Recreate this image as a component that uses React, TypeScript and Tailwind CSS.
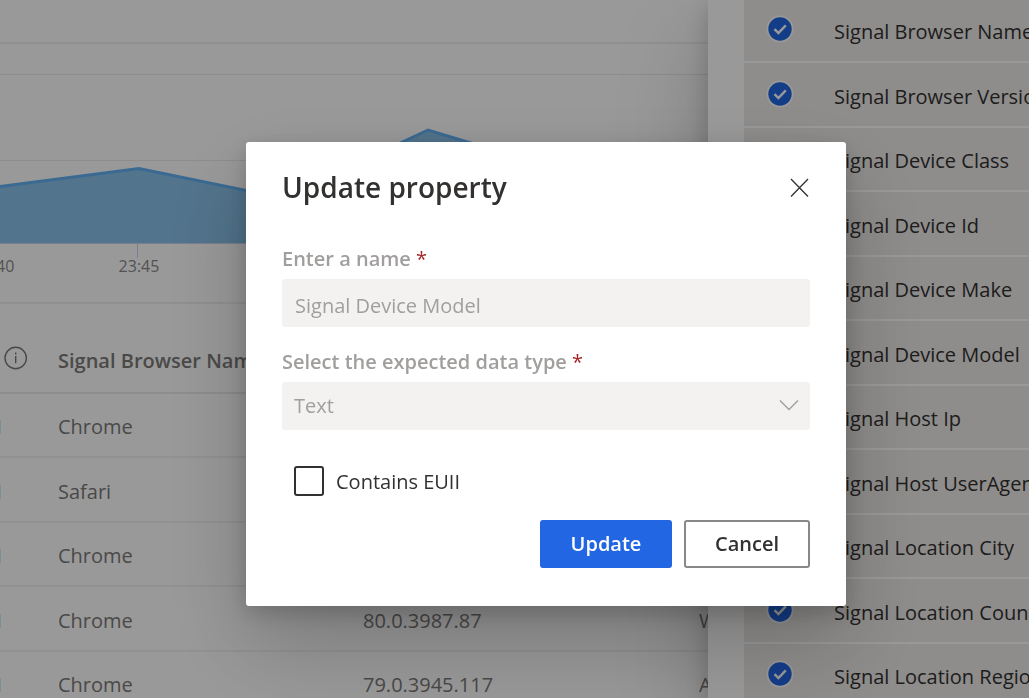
import type { ReactNode } from 'react';

const properties = [
  'Signal Browser Name',
  'Signal Browser Version',
  'Signal Device Class',
  'Signal Device Id',
  'Signal Device Make',
  'Signal Device Model',
  'Signal Host Ip',
  'Signal Host UserAgent',
  'Signal Location City',
  'Signal Location Country',
  'Signal Location Region',
];

const rows = [
  { browser: 'Chrome', version: '', device: '' },
  { browser: 'Safari', version: '', device: '' },
  { browser: 'Chrome', version: '', device: '' },
  { browser: 'Chrome', version: '80.0.3987.87', device: 'W' },
  { browser: 'Chrome', version: '79.0.3945.117', device: 'A' },
];

function Chart() {
  return (
    <div className="h-[302px] overflow-hidden">
      <svg width="720" height="302" viewBox="0 0 720 302" role="img" aria-label="Signals over time">
        <rect x="0" y="42" width="720" height="2" fill="#f1f0ef" />
        <rect x="0" y="74" width="720" height="1" fill="#ebebeb" />
        <rect x="0" y="160" width="720" height="1" fill="#ebebeb" />
        <path d="M-7 187.5L139 168.5L283 198L428 130L573 174L718 190V244H-7Z" fill="#89c1e9" />
        <path d="M-7 187.5L139 168.5L283 198L428 130L573 174L718 190" fill="none" stroke="#61b0f3" strokeWidth="3" />
        <rect x="0" y="243" width="720" height="1" fill="#ccd6eb" />
        <rect x="137" y="244" width="1" height="14" fill="#ccd6eb" />
        <g fontSize="16" fill="#8a8a8a" textAnchor="middle">
          <text x="-6" y="272">23:40</text>
          <text x="139" y="272">23:45</text>
        </g>
      </svg>
    </div>
  );
}

function SignalTable() {
  return (
    <table className="w-full table-fixed border-separate border-spacing-0 border-t-2 border-[#f1f0ef] text-left whitespace-nowrap text-[#7c7a78]">
      <colgroup>
        <col className="w-[58px]" />
        <col className="w-[305px]" />
        <col className="w-[336px]" />
        <col />
      </colgroup>
      <thead>
        <tr className="h-[90px]">
          <th className="border-b-2 border-[#edebe9] p-0 pt-5 pl-1">
            <svg width="24" height="24" viewBox="0 0 24 24" fill="none" stroke="#7c7a78" strokeWidth="1.4" aria-label="Info">
              <circle cx="11.7" cy="12" r="10.7" />
              <path d="M11.7 10v7.2M11.7 6.6v1.8" />
            </svg>
          </th>
          <th className="border-b-2 border-[#edebe9] p-0 pt-[26px] font-semibold">Signal Browser Name</th>
          <th className="border-b-2 border-[#edebe9] p-0" />
          <th className="border-b-2 border-[#edebe9] p-0" />
        </tr>
      </thead>
      <tbody>
        {rows.map((row, index) => (
          <tr key={index} className="odd:h-16 even:h-[65px]">
            <td className="border-b-2 border-[#f3f2f1] p-0 pt-1">
              <span className="flex w-[2px] justify-end">M</span>
            </td>
            <td className="border-b-2 border-[#f3f2f1] p-0 pt-1">{row.browser}</td>
            <td className="border-b-2 border-[#f3f2f1] p-0 pt-1">{row.version}</td>
            <td className="border-b-2 border-[#f3f2f1] p-0 pt-1">{row.device}</td>
          </tr>
        ))}
      </tbody>
    </table>
  );
}

function CheckBadge() {
  return (
    <svg width="28" height="28" viewBox="0 0 28 28" fill="none" aria-hidden="true">
      <circle cx="14" cy="14" r="13.4" fill="#ffffff" />
      <circle cx="14" cy="14" r="11.7" fill="#2266e3" />
      <path d="M8.5 14.2L12.4 18.1L19.8 10.3" stroke="#ffffff" strokeWidth="2.4" />
    </svg>
  );
}

function PropertyPanel() {
  return (
    <aside className="relative w-[321px] shrink-0 bg-white pl-9 shadow-[0_38px_86px_rgba(0,0,0,0.22),0_7px_22px_rgba(0,0,0,0.18)]">
      <ul className="-mt-px overflow-hidden">
        {properties.map((name) => (
          <li
            key={name}
            className="flex items-center gap-10 border-b-2 border-white bg-[#edebe9] pt-1 pl-[22px] whitespace-nowrap text-[#323130] odd:h-16 even:h-[65px]"
          >
            <span className="-mt-1.5 shrink-0">
              <CheckBadge />
            </span>
            <span>{name}</span>
          </li>
        ))}
      </ul>
    </aside>
  );
}

function FieldLabel({ htmlFor, children }: { htmlFor: string; children: ReactNode }) {
  return (
    <label htmlFor={htmlFor} className="block h-9 leading-8 font-semibold text-[#a19f9d]">
      {children} <span className="font-normal text-[#a4262c]">*</span>
    </label>
  );
}

function UpdateDialog() {
  return (
    <div className="fixed inset-0 flex items-center justify-center bg-black/40 pt-[50px] pl-[63px]">
      <div
        role="dialog"
        aria-modal="true"
        aria-labelledby="dialog-title"
        className="w-[600px] rounded-[3px] bg-white shadow-[0_38px_86px_rgba(0,0,0,0.22),0_7px_22px_rgba(0,0,0,0.18)]"
      >
        <header className="flex h-[101px] items-start justify-between pt-6 pr-6 pl-9">
          <h1 id="dialog-title" className="text-[28px] leading-[42px] font-semibold text-[#323130]">
            Update property
          </h1>
          <button type="button" aria-label="Close" className="flex h-11 w-11 items-center justify-center">
            <svg width="20" height="20" viewBox="0 0 20 20" fill="none" stroke="#323130" strokeWidth="1.3">
              <path d="M1 1L18 18.5M18 1L1 18.5" />
            </svg>
          </button>
        </header>
        <form className="px-9 pb-[38px]" onSubmit={(event) => event.preventDefault()}>
          <FieldLabel htmlFor="property-name">Enter a name</FieldLabel>
          <input
            id="property-name"
            type="text"
            disabled
            defaultValue="Signal Device Model"
            className="block h-12 w-full rounded-[3px] bg-[#f3f2f1] px-[13px] pt-1 text-[#a19f9d]"
          />
          <div className="pt-[19px]">
            <FieldLabel htmlFor="data-type">Select the expected data type</FieldLabel>
            <div className="relative">
              <select
                id="data-type"
                disabled
                defaultValue="Text"
                className="block h-12 w-full appearance-none rounded-[3px] bg-[#f3f2f1] px-3 text-[#a19f9d] opacity-100"
              >
                <option>Text</option>
              </select>
              <svg
                width="20"
                height="12"
                viewBox="0 0 20 12"
                fill="none"
                stroke="#a19f9d"
                strokeWidth="1.4"
                className="pointer-events-none absolute top-[17px] right-[11px]"
              >
                <path d="M1 1.5L10 10.5L19 1.5" />
              </svg>
            </div>
          </div>
          <label className="mt-9 flex items-center gap-3 pl-3 text-[#323130]">
            <input type="checkbox" className="h-[30px] w-[30px] appearance-none rounded-[3px] border-2 border-[#323130]" />
            <span className="pt-0.5">Contains EUII</span>
          </label>
          <div className="mt-6 flex justify-end gap-3">
            <button type="submit" className="h-12 w-[132px] rounded-[3px] bg-[#2266e3] font-semibold text-white">
              Update
            </button>
            <button
              type="button"
              className="h-12 w-[126px] rounded-[3px] border-2 border-[#8a8886] bg-white font-semibold text-[#323130]"
            >
              Cancel
            </button>
          </div>
        </form>
      </div>
    </div>
  );
}

export default function App() {
  return (
    <div className="flex h-screen overflow-hidden bg-white font-['Open_Sans','Noto_Sans',sans-serif] text-[20px] leading-7">
      <main className="min-w-0 flex-1 overflow-hidden">
        <Chart />
        <SignalTable />
      </main>
      <PropertyPanel />
      <UpdateDialog />
    </div>
  );
}
